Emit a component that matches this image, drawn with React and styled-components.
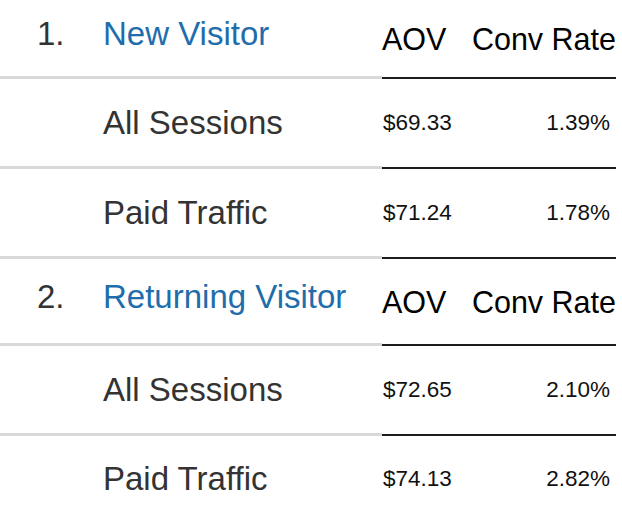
import React from "react";
import styled, { createGlobalStyle } from "styled-components";

const sections = [
  {
    num: "1.",
    title: "New Visitor",
    height: 79,
    rows: [
      ["All Sessions", "$69.33", "1.39%"],
      ["Paid Traffic", "$71.24", "1.78%"],
    ],
  },
  {
    num: "2.",
    title: "Returning Visitor",
    height: 87,
    rows: [
      ["All Sessions", "$72.65", "2.10%"],
      ["Paid Traffic", "$74.13", "2.82%"],
    ],
  },
];

const GlobalStyle = createGlobalStyle`
  body {
    margin: 0;
    background: #fff;
    font-family: "Liberation Sans", Arial, sans-serif;
  }
`;

const Table = styled.div`
  width: 616px;
  display: flex;
  flex-direction: column;
`;

const Row = styled.div`
  display: grid;
  grid-template-columns: 382px 1fr;
  height: ${(p) => p.h}px;
`;

const LeftCell = styled.div`
  display: flex;
  align-items: center;
  padding-bottom: ${(p) => (p.lift ? 9 : 0)}px;
  border-bottom: ${(p) => (p.last ? "none" : "3px solid #d9d9d9")};
  box-sizing: border-box;
`;

const RightCell = styled.div`
  display: flex;
  align-items: center;
  justify-content: space-between;
  padding-top: ${(p) => (p.drop ? 1 : 0)}px;
  border-bottom: ${(p) => (p.last ? "none" : "2px solid #1c1c1c")};
  box-sizing: border-box;
`;

const Num = styled.span`
  width: 66px;
  padding-left: 37px;
  font-size: 33px;
  color: #333;
`;

const Title = styled.span`
  font-size: 33px;
  color: #1f6dab;
`;

const Label = styled.span`
  padding-left: 103px;
  font-size: 33px;
  color: #333;
`;

const HeadText = styled.span`
  font-size: 30.5px;
  color: #000;
`;

const Value = styled.span`
  font-size: 22.5px;
  color: #111;
  padding-left: 1px;
  padding-right: ${(p) => (p.end ? 6 : 0)}px;
`;

export default function App() {
  return (
    <>
      <GlobalStyle />
      <Table>
        {sections.map((s, si) => (
          <React.Fragment key={s.title}>
            <Row h={s.height}>
              <LeftCell lift>
                <Num>{s.num}</Num>
                <Title>{s.title}</Title>
              </LeftCell>
              <RightCell drop>
                <HeadText>AOV</HeadText>
                <HeadText>Conv Rate</HeadText>
              </RightCell>
            </Row>
            {s.rows.map((r, ri) => {
              const last = si === sections.length - 1 && ri === s.rows.length - 1;
              return (
                <Row key={ri} h={last ? 86 : 90}>
                  <LeftCell last={last}>
                    <Label>{r[0]}</Label>
                  </LeftCell>
                  <RightCell last={last}>
                    <Value>{r[1]}</Value>
                    <Value end>{r[2]}</Value>
                  </RightCell>
                </Row>
              );
            })}
          </React.Fragment>
        ))}
      </Table>
    </>
  );
}
